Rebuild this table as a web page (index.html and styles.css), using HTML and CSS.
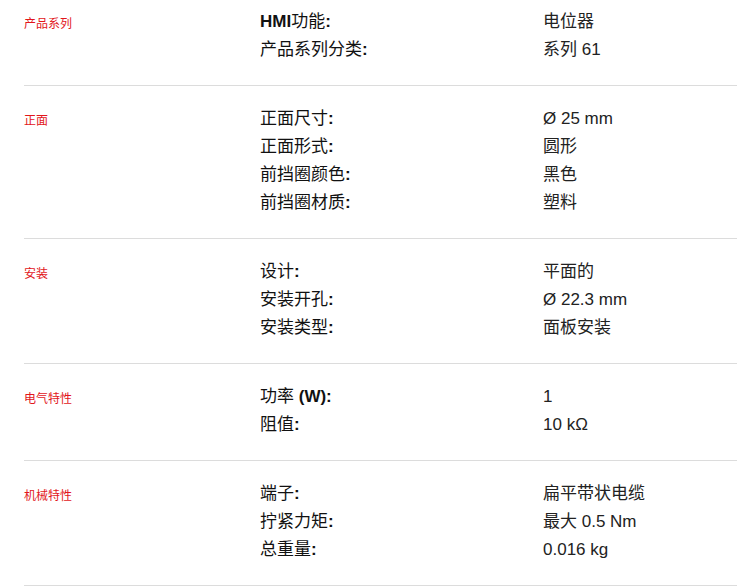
FILE: index.html
```html
<!DOCTYPE html>
<html lang="zh">
<head>
<meta charset="utf-8">
<title>规格</title>
<link rel="stylesheet" href="styles.css">
</head>
<body>
<div class="specs">
  <section class="group first">
    <div class="label">产品系列</div>
    <div class="rows">
      <div class="row"><div class="key"><b>HMI</b>功能<b>:</b></div><div class="val">电位器</div></div>
      <div class="row"><div class="key">产品系列分类<b>:</b></div><div class="val">系列 61</div></div>
    </div>
  </section>
  <section class="group">
    <div class="label">正面</div>
    <div class="rows">
      <div class="row"><div class="key">正面尺寸<b>:</b></div><div class="val">Ø 25 mm</div></div>
      <div class="row"><div class="key">正面形式<b>:</b></div><div class="val">圆形</div></div>
      <div class="row"><div class="key">前挡圈颜色<b>:</b></div><div class="val">黑色</div></div>
      <div class="row"><div class="key">前挡圈材质<b>:</b></div><div class="val">塑料</div></div>
    </div>
  </section>
  <section class="group">
    <div class="label">安装</div>
    <div class="rows">
      <div class="row"><div class="key">设计<b>:</b></div><div class="val">平面的</div></div>
      <div class="row"><div class="key">安装开孔<b>:</b></div><div class="val">Ø 22.3 mm</div></div>
      <div class="row"><div class="key">安装类型<b>:</b></div><div class="val">面板安装</div></div>
    </div>
  </section>
  <section class="group">
    <div class="label">电气特性</div>
    <div class="rows">
      <div class="row"><div class="key">功率 <b>(W):</b></div><div class="val">1</div></div>
      <div class="row"><div class="key">阻值<b>:</b></div><div class="val">10 kΩ</div></div>
    </div>
  </section>
  <section class="group">
    <div class="label">机械特性</div>
    <div class="rows">
      <div class="row"><div class="key">端子<b>:</b></div><div class="val">扁平带状电缆</div></div>
      <div class="row"><div class="key">拧紧力矩<b>:</b></div><div class="val">最大 0.5 Nm</div></div>
      <div class="row"><div class="key">总重量<b>:</b></div><div class="val">0.016 kg</div></div>
    </div>
  </section>
</div>
</body>
</html>
```
FILE: styles.css
```css
html, body {
  margin: 0;
  padding: 0;
  background: #fff;
}
body {
  font-family: "Liberation Sans", "Noto Sans CJK SC", sans-serif;
  color: #111;
}
.specs {
  padding-left: 24px;
}
.group {
  display: grid;
  grid-template-columns: 236px 1fr;
  padding: 19px 0 21px;
  border-bottom: 1px solid #dcdcdc;
}
.group.first {
  padding-top: 8px;
}
.label {
  font-size: 12px;
  line-height: 28px;
  padding-top: 2px;
  color: #e2161b;
}
.rows {
  display: flex;
  flex-direction: column;
}
.row {
  display: grid;
  grid-template-columns: 283px 1fr;
  height: 28px;
  line-height: 28px;
  font-size: 17px;
}
.key {
  color: #111;
}
.key b {
  font-weight: bold;
}
.val {
  color: #222;
}
```
